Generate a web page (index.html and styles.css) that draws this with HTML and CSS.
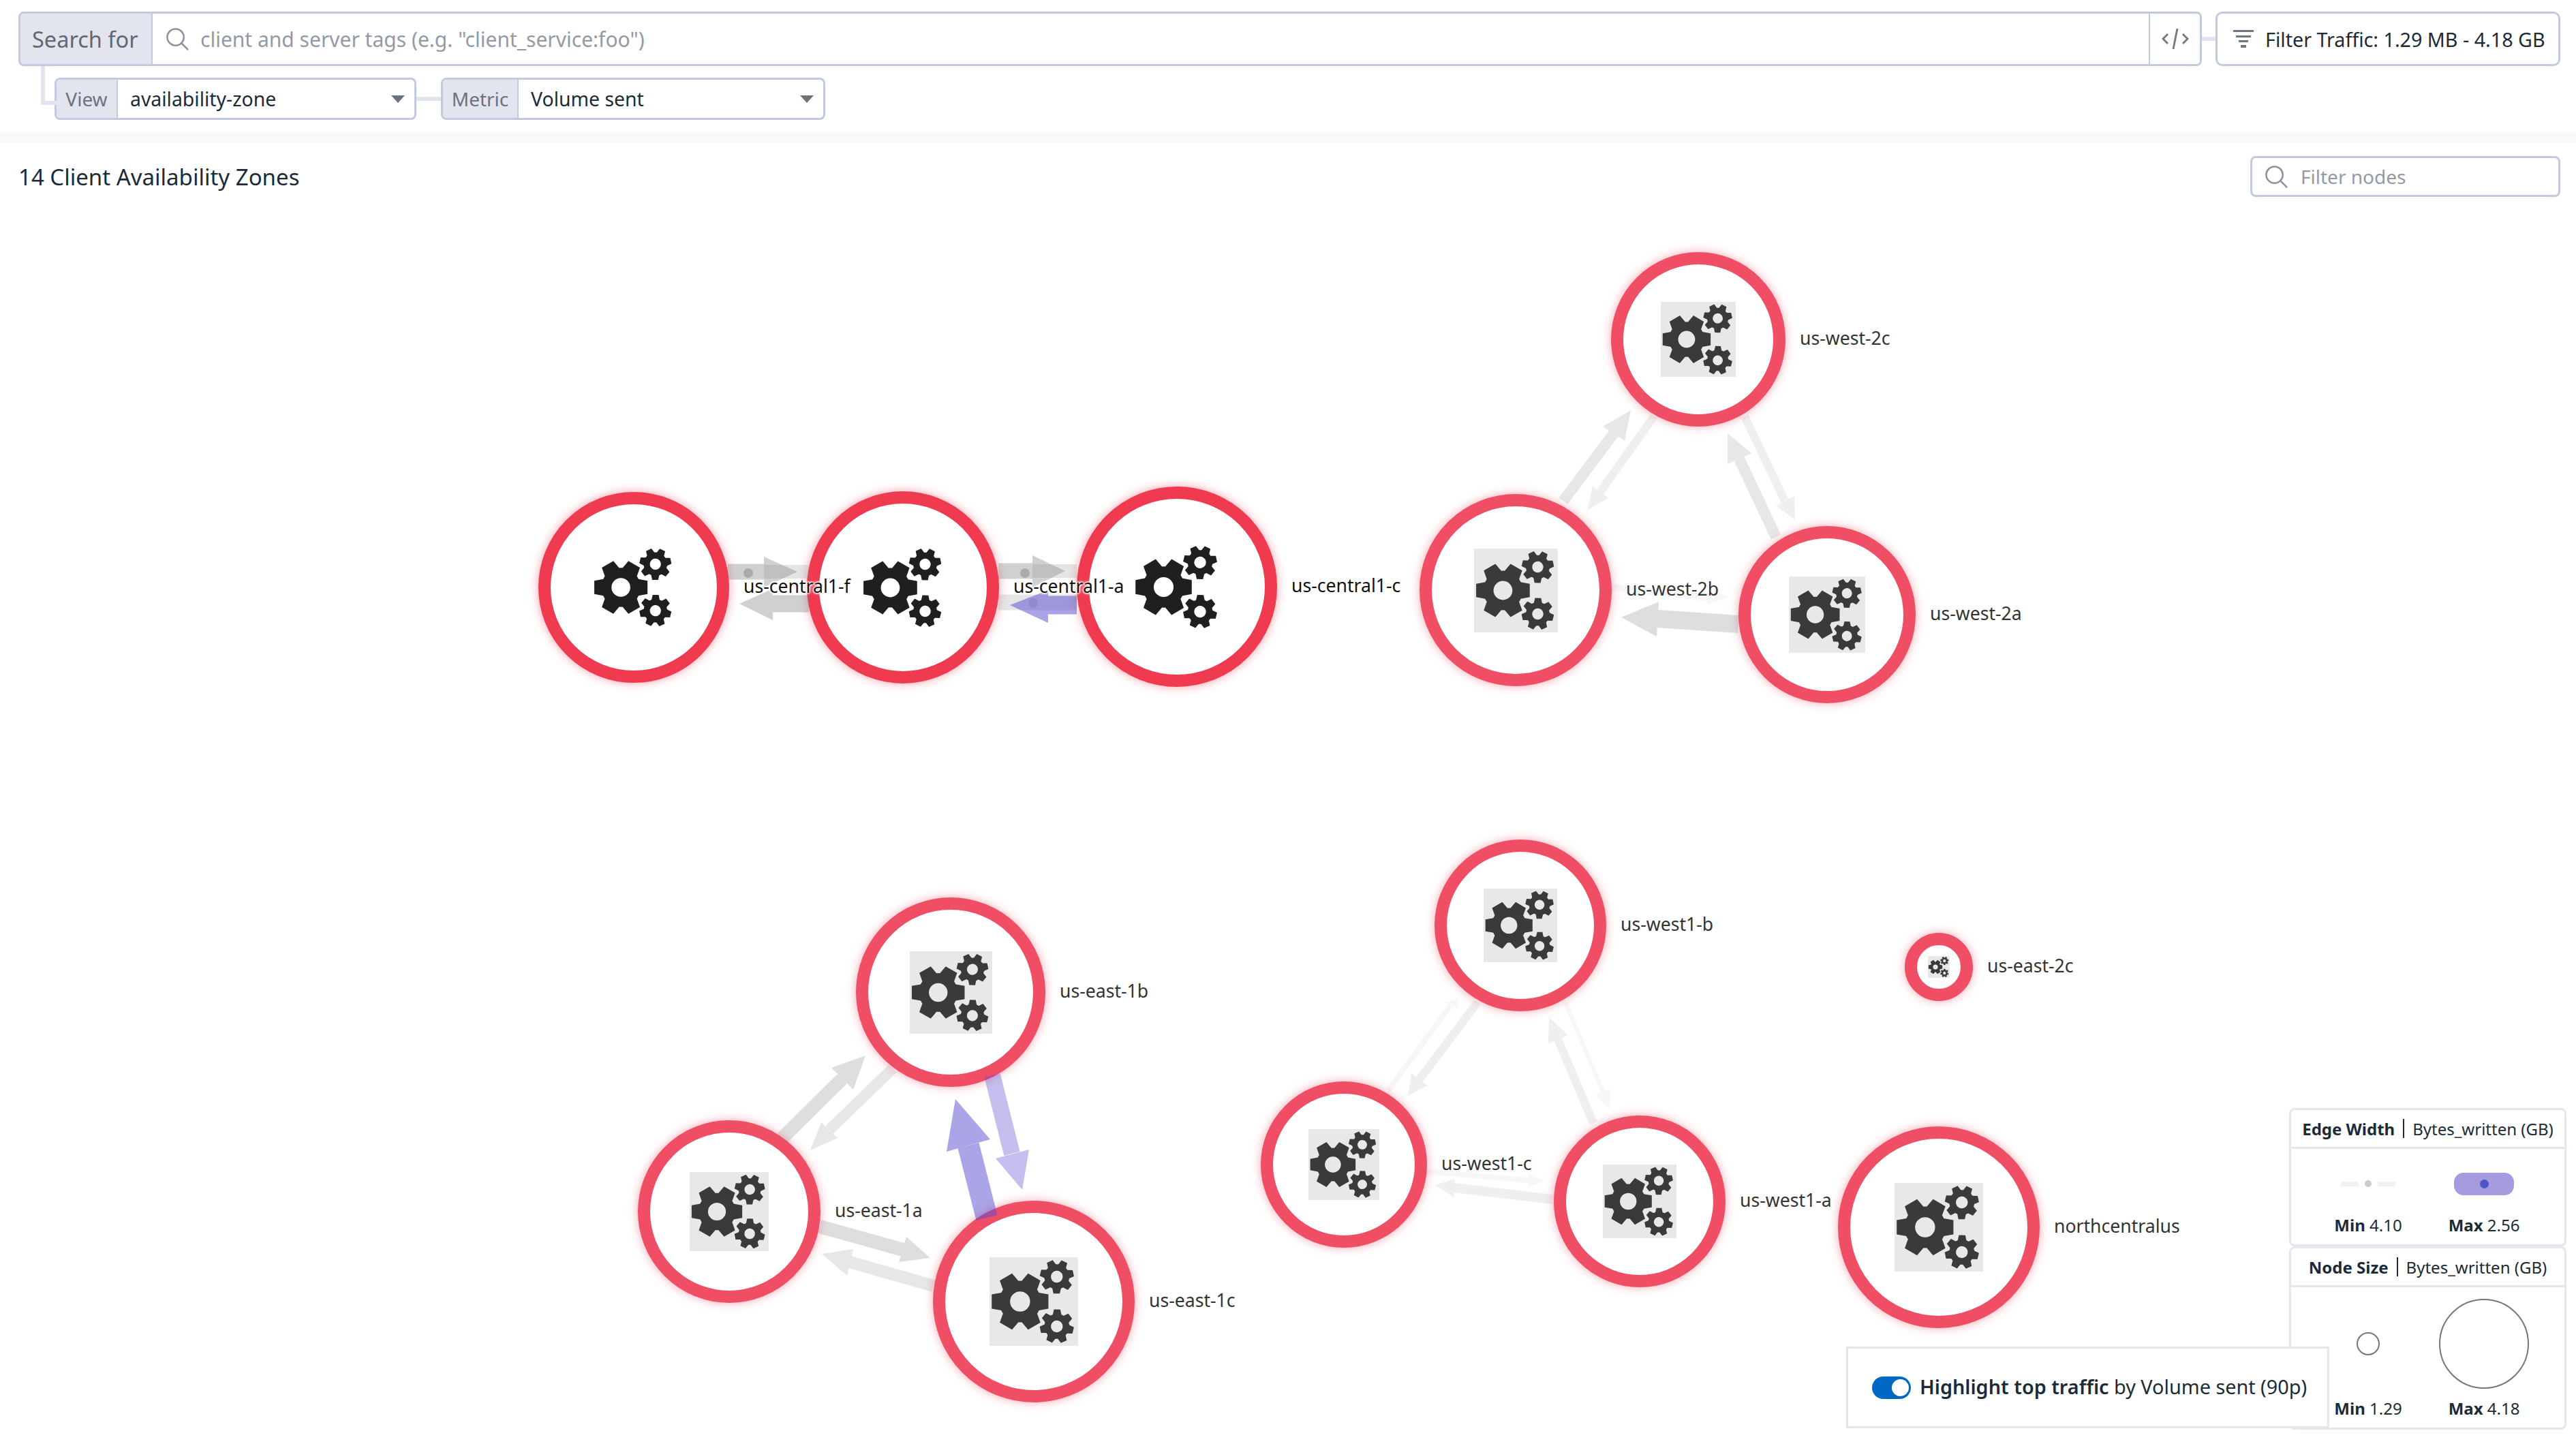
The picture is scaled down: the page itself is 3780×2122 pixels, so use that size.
FILE: index.html
```html
<!DOCTYPE html>
<html lang="en">
<head>
    <meta charset="UTF-8">
    <title>Network Map</title>
    <link rel="stylesheet" href="styles.css">
</head>
<body>
    <!-- shared icons -->
    <svg class="defs" aria-hidden="true">
        <defs>
            <g id="gearBig">
                <circle r="17.4" fill="none" stroke="currentColor" stroke-width="12.2"/>
                <polygon id="toothBig" points="21,-10 32,-8 32,8 21,10" fill="currentColor"/>
                <use href="#toothBig" transform="rotate(60)"/>
                <use href="#toothBig" transform="rotate(120)"/>
                <use href="#toothBig" transform="rotate(180)"/>
                <use href="#toothBig" transform="rotate(240)"/>
                <use href="#toothBig" transform="rotate(300)"/>
            </g>
            <g id="gearSmall">
                <circle r="10.4" fill="none" stroke="currentColor" stroke-width="7.4"/>
                <polygon id="toothSmall" points="12.5,-5 19,-3.6 19,3.6 12.5,5" fill="currentColor"/>
                <use href="#toothSmall" transform="rotate(51.4)"/>
                <use href="#toothSmall" transform="rotate(102.9)"/>
                <use href="#toothSmall" transform="rotate(154.3)"/>
                <use href="#toothSmall" transform="rotate(205.7)"/>
                <use href="#toothSmall" transform="rotate(257.1)"/>
                <use href="#toothSmall" transform="rotate(308.6)"/>
            </g>
            <symbol id="gears" viewBox="0 0 100 100">
                <use href="#gearBig" x="34.5" y="50"/>
                <use href="#gearSmall" transform="translate(76 22) rotate(-12)"/>
                <use href="#gearSmall" transform="translate(76 78) rotate(14)"/>
            </symbol>
            <symbol id="searchIcon" viewBox="0 0 36 36">
                <circle cx="15" cy="15" r="12.5" fill="none" stroke="currentColor" stroke-width="2.6"/>
                <line x1="24" y1="24" x2="34" y2="34" stroke="currentColor" stroke-width="2.6"/>
            </symbol>
        </defs>
    </svg>

    <div class="page">
        <header class="toolbar">
            <div class="searchRow">
                <div class="searchGroup">
                    <span class="addon addonSearch">Search for</span>
                    <div class="searchField">
                        <svg class="iconSearch"><use href="#searchIcon"/></svg>
                        <span class="placeholder">client and server tags (e.g. "client_service:foo")</span>
                    </div>
                    <button class="codeBtn" aria-label="Code">
                        <svg viewBox="0 0 40 30" class="iconCode">
                            <polyline points="9,8 2,15 9,22" fill="none" stroke="currentColor" stroke-width="2.8"/>
                            <polyline points="31,8 38,15 31,22" fill="none" stroke="currentColor" stroke-width="2.8"/>
                            <line x1="23" y1="0" x2="17" y2="30" stroke="currentColor" stroke-width="2.8"/>
                        </svg>
                    </button>
                </div>
                <span class="linkH"></span>
                <div class="filterTraffic">
                    <svg viewBox="0 0 30 26" class="iconFilter">
                        <rect x="0" y="0" width="30" height="3" fill="currentColor"/>
                        <rect x="4" y="8" width="22" height="3" fill="currentColor"/>
                        <rect x="8" y="15" width="14" height="3" fill="currentColor"/>
                        <rect x="11" y="22" width="8" height="4" fill="currentColor"/>
                    </svg>
                    <span>Filter Traffic: 1.29 MB - 4.18 GB</span>
                </div>
            </div>
            <div class="selectRow">
                <div class="selectGroup selectView">
                    <span class="addon addonSmall addonView">View</span>
                    <span class="selectValue">availability-zone</span>
                    <span class="caret"></span>
                </div>
                <span class="linkV"></span>
                <div class="selectGroup selectMetric">
                    <span class="addon addonSmall addonMetric">Metric</span>
                    <span class="selectValue">Volume sent</span>
                    <span class="caret"></span>
                </div>
            </div>
        </header>

        <div class="band"></div>

        <div class="titleRow">
            <h2 class="title">14 Client Availability Zones</h2>
            <div class="filterNodes">
                <svg class="iconSearch"><use href="#searchIcon"/></svg>
                <span class="placeholder">Filter nodes</span>
            </div>
        </div>

        <!-- node positions come from the map layout -->
        <div class="graph">
            <div class="node focus" style="--x:930;--y:862;--r:140"><svg class="gearBox"><use href="#gears"/></svg><span class="nodeLabel">us-central1-f</span></div>
            <div class="node focus" style="--x:1325;--y:862;--r:141"><svg class="gearBox"><use href="#gears"/></svg><span class="nodeLabel">us-central1-a</span></div>
            <div class="node focus" style="--x:1727;--y:861;--r:147"><svg class="gearBox"><use href="#gears"/></svg><span class="nodeLabel">us-central1-c</span></div>

            <div class="node" style="--x:2492;--y:498;--r:128"><svg class="gearBox"><use href="#gears"/></svg><span class="nodeLabel">us-west-2c</span></div>
            <div class="node" style="--x:2224;--y:866;--r:141"><svg class="gearBox"><use href="#gears"/></svg><span class="nodeLabel">us-west-2b</span></div>
            <div class="node" style="--x:2681;--y:902;--r:130"><svg class="gearBox"><use href="#gears"/></svg><span class="nodeLabel">us-west-2a</span></div>

            <div class="node" style="--x:1395;--y:1456;--r:139"><svg class="gearBox"><use href="#gears"/></svg><span class="nodeLabel">us-east-1b</span></div>
            <div class="node" style="--x:1070;--y:1778;--r:134"><svg class="gearBox"><use href="#gears"/></svg><span class="nodeLabel">us-east-1a</span></div>
            <div class="node" style="--x:1517;--y:1910;--r:148"><svg class="gearBox"><use href="#gears"/></svg><span class="nodeLabel">us-east-1c</span></div>

            <div class="node" style="--x:2231;--y:1358;--r:126"><svg class="gearBox"><use href="#gears"/></svg><span class="nodeLabel">us-west1-b</span></div>
            <div class="node" style="--x:1972;--y:1709;--r:122"><svg class="gearBox"><use href="#gears"/></svg><span class="nodeLabel">us-west1-c</span></div>
            <div class="node" style="--x:2406;--y:1763;--r:126"><svg class="gearBox"><use href="#gears"/></svg><span class="nodeLabel">us-west1-a</span></div>

            <div class="node" style="--x:2845;--y:1419;--r:50"><svg class="gearBox"><use href="#gears"/></svg><span class="nodeLabel">us-east-2c</span></div>
            <div class="node" style="--x:2845;--y:1801;--r:148"><svg class="gearBox"><use href="#gears"/></svg><span class="nodeLabel">northcentralus</span></div>

            <svg class="edges" viewBox="0 0 3780 2122">
                <!-- us-central -->
                <g class="edge w20"><line x1="1121" y1="839" x2="1187" y2="839" stroke-width="20"/></g>
                <g class="edge w32"><line x1="1068" y1="839" x2="1121" y2="839" stroke-width="23"/><polygon points="1121,817 1170,839 1121,862"/></g>
                <g class="edge w32"><line x1="1187" y1="886" x2="1134" y2="886" stroke-width="25"/><polygon points="1134,864 1085,886 1134,910"/></g>
                <ellipse class="edgeDot" cx="1098" cy="841" rx="7" ry="7"/>
                <g class="edge w20"><line x1="1515" y1="838" x2="1580" y2="838" stroke-width="20"/></g>
                <g class="edge w32"><line x1="1465" y1="838" x2="1515" y2="838" stroke-width="23"/><polygon points="1515,815 1563,838 1515,862"/></g>
                <ellipse class="edgeDot" cx="1504" cy="841" rx="7" ry="7"/>
                <g class="edge w20"><line x1="1465" y1="884" x2="1580" y2="884" stroke-width="23"/></g>
                <g class="edge top w50"><line x1="1580" y1="888" x2="1538" y2="888" stroke-width="27"/><polygon points="1538,866 1482,888 1538,914"/></g>
                <ellipse class="edgeDot topDot" cx="1516" cy="885" rx="7" ry="7"/>

                <!-- us-west-2 -->
                <g class="edge w18"><line x1="2294" y1="735" x2="2368" y2="636" stroke-width="16"/><polygon points="2352,626 2393,602 2384,647"/></g>
                <g class="edge w12"><line x1="2427" y1="611" x2="2348" y2="722" stroke-width="12"/><polygon points="2337,714 2329,749 2360,731"/></g>
                <g class="edge w18"><line x1="2606" y1="788" x2="2552" y2="673" stroke-width="16"/><polygon points="2535,681 2535,636 2570,665"/></g>
                <g class="edge w12"><line x1="2560" y1="611" x2="2619" y2="735" stroke-width="12"/><polygon points="2633,728 2634,763 2606,742"/></g>
                <g class="edge w25"><line x1="2551" y1="916" x2="2432" y2="908" stroke-width="26"/><polygon points="2434,883 2379,906 2431,934"/></g>
                <g class="edge w05"><line x1="2366" y1="862" x2="2505" y2="877" stroke-width="10"/><polygon points="2505,868 2537,875 2505,887"/></g>

                <!-- us-east-1 -->
                <g class="edge w25"><line x1="1148" y1="1670" x2="1236" y2="1583" stroke-width="20"/><polygon points="1220,1567 1270,1549 1252,1599"/></g>
                <g class="edge w18"><line x1="1310" y1="1568" x2="1217" y2="1658" stroke-width="16"/><polygon points="1205,1647 1189,1688 1229,1670"/></g>
                <g class="edge top w50"><line x1="1448" y1="1787" x2="1421" y2="1681" stroke-width="32"/><polygon points="1389,1690 1402,1613 1453,1672"/></g>
                <g class="edge top w35"><line x1="1456" y1="1578" x2="1485" y2="1693" stroke-width="24"/><polygon points="1461,1700 1500,1746 1510,1687"/></g>
                <g class="edge w25"><line x1="1203" y1="1800" x2="1325" y2="1834" stroke-width="20"/><polygon points="1330,1815 1365,1846 1319,1852"/></g>
                <g class="edge w18"><line x1="1370" y1="1887" x2="1247" y2="1852" stroke-width="18"/><polygon points="1252,1833 1206,1840 1243,1872"/></g>

                <!-- us-west1 -->
                <g class="edge w12"><line x1="2168" y1="1471" x2="2083" y2="1584" stroke-width="12"/><polygon points="2071,1575 2066,1608 2095,1593"/></g>
                <g class="edge w05"><line x1="2037" y1="1600" x2="2129" y2="1475" stroke-width="8"/><polygon points="2120,1471 2140,1465 2139,1480"/></g>
                <g class="edge w12"><line x1="2338" y1="1648" x2="2286" y2="1525" stroke-width="12"/><polygon points="2272,1531 2273,1493 2301,1519"/></g>
                <g class="edge w05"><line x1="2297" y1="1471" x2="2352" y2="1602" stroke-width="6"/><polygon points="2363,1598 2362,1627 2341,1607"/></g>
                <g class="edge w12"><line x1="2278" y1="1760" x2="2134" y2="1743" stroke-width="14"/><polygon points="2135,1730 2106,1739 2133,1757"/></g>
                <g class="edge w05"><line x1="2094" y1="1719" x2="2243" y2="1732" stroke-width="8"/><polygon points="2243,1723 2268,1734 2243,1741"/></g>
            </svg>
        </div>

        <aside class="legend">
            <div class="legendHead"><b>Edge Width</b><i></i>Bytes_written (GB)</div>
            <div class="legendBody edgeBody">
                <div class="legendCell">
                    <div class="sample"><span class="minEdge"><em></em><u></u><em></em></span></div>
                    <div class="legendValue"><b>Min</b> 4.10</div>
                </div>
                <div class="legendCell">
                    <div class="sample"><span class="maxEdge"><u></u></span></div>
                    <div class="legendValue"><b>Max</b> 2.56</div>
                </div>
            </div>
            <div class="legendHead"><b>Node Size</b><i></i>Bytes_written (GB)</div>
            <div class="legendBody sizeBody">
                <div class="legendCell">
                    <div class="sample"><span class="minSize"></span></div>
                    <div class="legendValue"><b>Min</b> 1.29</div>
                </div>
                <div class="legendCell">
                    <div class="sample"><span class="maxSize"></span></div>
                    <div class="legendValue"><b>Max</b> 4.18</div>
                </div>
            </div>
        </aside>

        <div class="highlight">
            <span class="toggle"></span>
            <span class="highlightText"><b>Highlight top traffic</b> by Volume sent (90p)</span>
        </div>
    </div>
</body>
</html>
```

FILE: styles.css
```css
* {
    box-sizing: border-box;
}

body {
    margin: 0;
    font-family: "Noto Sans", "Open Sans", sans-serif;
    background-color: #fff;
    color: #1c2b39;
}

.defs {
    position: absolute;
    width: 0;
    height: 0;
}

.page {
    position: relative;
    width: 3780px;
    height: 2122px;
    overflow: hidden;
    background-color: #fff;
}

/* toolbar */
.toolbar {
    padding: 17px 23px 0 27px;
}

.searchRow {
    display: flex;
    align-items: center;
    height: 80px;
}

.searchGroup {
    flex: 1;
    display: flex;
    height: 100%;
    border: 3px solid #c3cadf;
    border-radius: 8px;
    overflow: hidden;
}

.addon {
    display: flex;
    align-items: center;
    background-color: #e2e5ee;
    border-right: 2px solid #c3cadf;
    color: #5f6873;
}

.addonSearch {
    width: 194px;
    padding-left: 17px;
    font-size: 32.5px;
}

.searchField {
    flex: 1;
    display: flex;
    align-items: center;
    gap: 16px;
    padding-left: 19px;
}

.iconSearch {
    width: 35px;
    height: 35px;
    color: #8b929e;
    flex-shrink: 0;
}

.placeholder {
    font-size: 30px;
    color: #939aa6;
}

.codeBtn {
    width: 75px;
    border: none;
    border-left: 2px solid #c3cadf;
    background-color: #fff;
    padding: 0;
    display: flex;
    align-items: center;
    justify-content: center;
}

.iconCode {
    width: 40px;
    height: 30px;
    color: #6f7782;
}

.linkH {
    width: 20px;
    height: 6px;
    background-color: #e2e5ee;
}

.filterTraffic {
    width: 506px;
    height: 100%;
    display: flex;
    align-items: center;
    gap: 17px;
    padding-left: 23px;
    border: 3px solid #c3cadf;
    border-radius: 10px;
    font-size: 28.7px;
    white-space: nowrap;
}

.iconFilter {
    width: 30px;
    height: 26px;
    color: #6f7782;
    flex-shrink: 0;
}

.selectRow {
    position: relative;
    display: flex;
    align-items: center;
    height: 62px;
    margin-top: 17px;
    padding-left: 53px;
}

/* elbow from the search bar down to the first select */
.selectRow::before {
    content: "";
    position: absolute;
    left: 33px;
    top: -17px;
    width: 20px;
    height: 51px;
    border-left: 6px solid #e2e5ee;
    border-bottom: 6px solid #e2e5ee;
}

.selectGroup {
    display: flex;
    align-items: center;
    height: 100%;
    border: 3px solid #c3cadf;
    border-radius: 8px;
    overflow: hidden;
    font-size: 28.4px;
}

.selectView {
    width: 531px;
}

.selectMetric {
    width: 564px;
}

.addonSmall {
    height: 100%;
    justify-content: center;
    font-size: 28px;
    color: #6b7280;
}

.addonView {
    width: 90px;
}

.addonMetric {
    width: 111px;
}

.selectValue {
    flex: 1;
    padding-left: 18px;
}

.caret {
    width: 0;
    height: 0;
    margin-right: 14px;
    border-left: 10px solid transparent;
    border-right: 10px solid transparent;
    border-top: 11px solid #6c7480;
}

.linkV {
    width: 36px;
    height: 6px;
    background-color: #e2e5ee;
}

.band {
    height: 17px;
    margin-top: 17px;
    background-color: #f8f9fb;
}

.titleRow {
    display: flex;
    align-items: center;
    justify-content: space-between;
    height: 60px;
    margin-top: 19px;
    padding: 0 23px 0 27px;
}

.title {
    margin: 0;
    font-size: 33px;
    font-weight: 400;
}

.filterNodes {
    width: 455px;
    height: 60px;
    display: flex;
    align-items: center;
    gap: 18px;
    padding-left: 18px;
    border: 3px solid #c3cadf;
    border-radius: 8px;
}

.filterNodes .placeholder {
    font-size: 28px;
}

/* network map */
.graph {
    position: absolute;
    inset: 0;
    pointer-events: none;
}

.edges {
    position: absolute;
    inset: 0;
    width: 3780px;
    height: 2122px;
    z-index: 1;
}

.edge {
    fill: #808080;
    stroke: #808080;
}

.edge polygon {
    stroke: none;
}

.edge.top {
    fill: #5a4bcf;
    stroke: #5a4bcf;
}

.w05 { opacity: 0.06; }
.w12 { opacity: 0.12; }
.w18 { opacity: 0.18; }
.w20 { opacity: 0.2; }
.w25 { opacity: 0.25; }
.w32 { opacity: 0.36; }
.w35 { opacity: 0.35; }
.w50 { opacity: 0.5; }

.edgeDot {
    fill: #aaa;
}

.topDot {
    fill: #8f8bd0;
}

.node {
    position: absolute;
    left: calc((var(--x) - var(--r)) * 1px);
    top: calc((var(--y) - var(--r)) * 1px);
    width: calc(var(--r) * 2px);
    height: calc(var(--r) * 2px);
    display: flex;
    align-items: center;
    justify-content: center;
    border: 18px solid #f04e64;
    border-radius: 50%;
    background-color: #fff;
    box-shadow: 0 0 14px rgba(240, 78, 100, 0.5);
    color: #3a3a3a;
}

.node.focus {
    border-color: #ef3a50;
    color: #1f1f1f;
    box-shadow: 0 0 14px rgba(239, 58, 80, 0.5);
}

.gearBox {
    width: calc((var(--r) - 18) * 1px);
    height: calc((var(--r) - 18) * 1px);
    background-color: #e8e8e8;
}

.focus .gearBox {
    background-color: transparent;
}

.nodeLabel {
    position: absolute;
    left: calc(100% + 39px);
    top: calc(50% - 2px);
    transform: translateY(-50%);
    z-index: 2;
    font-size: 26.6px;
    line-height: 34px;
    color: #333;
    white-space: nowrap;
    text-shadow: 0 0 2px #fff, 0 0 2px #fff, 0 0 3px #fff, 0 0 3px #fff;
}

.focus .nodeLabel {
    color: #111;
    text-shadow: 0 0 3px #fff, 0 0 3px #fff, 0 0 3px #fff, 0 0 4px #fff, 0 0 4px #fff;
}

/* legend */
.legend {
    position: absolute;
    left: 3359px;
    top: 1626px;
    z-index: 3;
    width: 407px;
    height: 472px;
    background-color: #fff;
    font-size: 24px;
    color: #1c2b39;
}

.legendHead {
    display: flex;
    align-items: center;
    justify-content: center;
    height: 60px;
    border: 3px solid #e4e7ee;
    border-radius: 8px 8px 0 0;
    white-space: nowrap;
}

.legendHead i {
    width: 2px;
    height: 28px;
    margin: 0 12px;
    background-color: #1c2b39;
}

.legendBody {
    display: flex;
    gap: 10px;
    border: 3px solid #e4e7ee;
    border-top: none;
    border-radius: 0 0 8px 8px;
    padding: 0 33px;
}

.edgeBody {
    height: 143px;
}

.sizeBody {
    height: 209px;
}

.legendCell {
    width: 160px;
    display: flex;
    flex-direction: column;
    align-items: center;
}

.sample {
    display: flex;
    align-items: center;
    justify-content: center;
}

.edgeBody .sample {
    height: 92px;
    margin-top: 5px;
}

.sizeBody .sample {
    height: 150px;
    margin-top: 8px;
}

.legendValue {
    line-height: 30px;
    white-space: nowrap;
}

.sizeBody .legendValue {
    margin-top: 5px;
}

.minEdge {
    display: flex;
    align-items: center;
    gap: 9px;
}

.minEdge em {
    width: 26px;
    height: 7px;
    background-color: #f1f1f1;
}

.minEdge u {
    width: 10px;
    height: 10px;
    border-radius: 50%;
    background-color: #ccc;
}

.maxEdge {
    width: 88px;
    height: 33px;
    display: flex;
    align-items: center;
    justify-content: center;
    border-radius: 14px;
    background-color: #a59bdf;
}

.maxEdge u {
    width: 13px;
    height: 13px;
    border-radius: 50%;
    background-color: #4f55c9;
}

.minSize {
    width: 34px;
    height: 34px;
    border: 2px solid #777;
    border-radius: 50%;
}

.maxSize {
    width: 132px;
    height: 132px;
    border: 2px solid #777;
    border-radius: 50%;
}

.highlight {
    position: absolute;
    left: 2709px;
    top: 1976px;
    z-index: 4;
    width: 709px;
    height: 120px;
    display: flex;
    align-items: center;
    gap: 13px;
    padding-left: 35px;
    border: 3px solid #e4e7ee;
    background-color: #fff;
}

.toggle {
    position: relative;
    width: 57px;
    height: 33px;
    border-radius: 17px;
    background-color: #0068c4;
}

.toggle::after {
    content: "";
    position: absolute;
    right: 3px;
    top: 4px;
    width: 25px;
    height: 25px;
    border-radius: 50%;
    background-color: #fff;
}

.highlightText {
    font-size: 28.8px;
    white-space: nowrap;
    transform: translateY(-2px);
}

.highlightText b {
    font-weight: 600;
}
```
